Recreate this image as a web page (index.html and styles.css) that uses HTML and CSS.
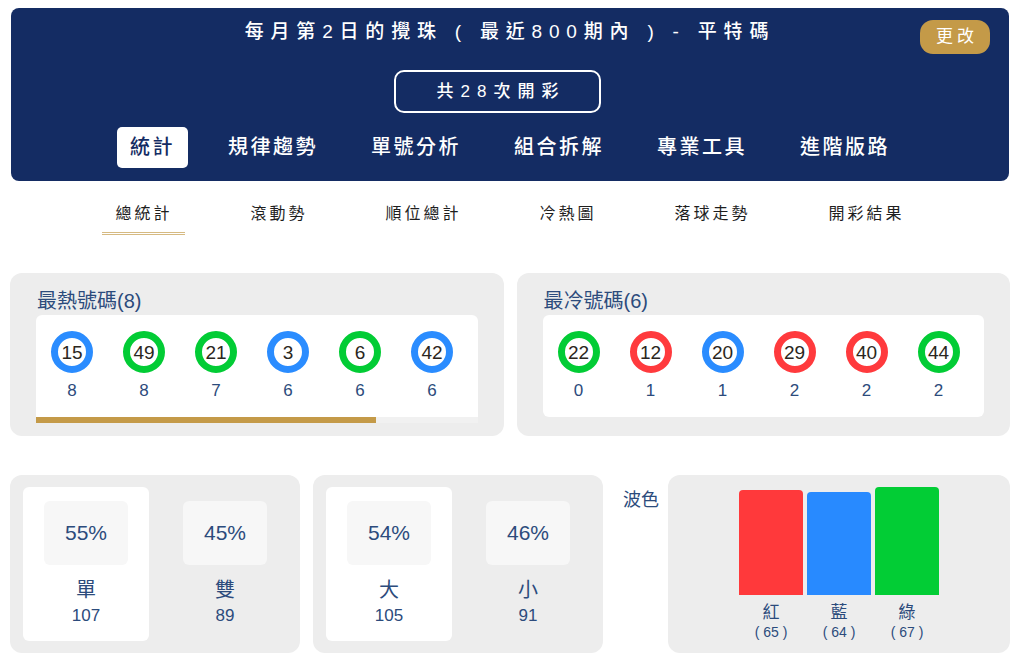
FILE: index.html
```html
<!DOCTYPE html>
<html lang="zh-Hant">
<head>
<meta charset="utf-8">
<title>每月第2日的攪珠 - 平特碼</title>
<link rel="stylesheet" href="styles.css">
</head>
<body>
<div class="page">
  <header class="hero">
    <div class="hero-top">
      <h1 class="hero-title">每月第2日的攪珠 ( 最近800期內 ) - 平特碼</h1>
      <button class="btn-change">更改</button>
    </div>
    <div class="draw-count">共28次開彩</div>
    <nav class="main-tabs">
      <a class="tab active">統計</a>
      <a class="tab">規律趨勢</a>
      <a class="tab">單號分析</a>
      <a class="tab">組合拆解</a>
      <a class="tab">專業工具</a>
      <a class="tab">進階版路</a>
    </nav>
  </header>

  <nav class="sub-tabs">
    <a class="sub-tab active">總統計</a>
    <a class="sub-tab">滾動勢</a>
    <a class="sub-tab">順位總計</a>
    <a class="sub-tab">冷熱圖</a>
    <a class="sub-tab">落球走勢</a>
    <a class="sub-tab">開彩結果</a>
  </nav>

  <section class="hotcold">
    <div class="card ball-card">
      <h2 class="card-title">最熱號碼(8)</h2>
      <div class="ball-box">
        <div class="ball-strip">
          <div class="ball-item"><span class="ball blue">15</span><span class="cnt">8</span></div>
          <div class="ball-item"><span class="ball green">49</span><span class="cnt">8</span></div>
          <div class="ball-item"><span class="ball green">21</span><span class="cnt">7</span></div>
          <div class="ball-item"><span class="ball blue">3</span><span class="cnt">6</span></div>
          <div class="ball-item"><span class="ball green">6</span><span class="cnt">6</span></div>
          <div class="ball-item"><span class="ball blue">42</span><span class="cnt">6</span></div>
        </div>
        <div class="scroll-track"><div class="scroll-thumb" style="width:77%"></div></div>
      </div>
    </div>
    <div class="card ball-card">
      <h2 class="card-title">最冷號碼(6)</h2>
      <div class="ball-box rounded">
        <div class="ball-strip">
          <div class="ball-item"><span class="ball green">22</span><span class="cnt">0</span></div>
          <div class="ball-item"><span class="ball red">12</span><span class="cnt">1</span></div>
          <div class="ball-item"><span class="ball blue">20</span><span class="cnt">1</span></div>
          <div class="ball-item"><span class="ball red">29</span><span class="cnt">2</span></div>
          <div class="ball-item"><span class="ball red">40</span><span class="cnt">2</span></div>
          <div class="ball-item"><span class="ball green">44</span><span class="cnt">2</span></div>
        </div>
      </div>
    </div>
  </section>

  <section class="stats">
    <div class="card pair-card">
      <div class="pair-col hl">
        <div class="pct">55%</div>
        <div class="lbl">單</div>
        <div class="num">107</div>
      </div>
      <div class="pair-col">
        <div class="pct">45%</div>
        <div class="lbl">雙</div>
        <div class="num">89</div>
      </div>
    </div>
    <div class="card pair-card">
      <div class="pair-col hl">
        <div class="pct">54%</div>
        <div class="lbl">大</div>
        <div class="num">105</div>
      </div>
      <div class="pair-col">
        <div class="pct">46%</div>
        <div class="lbl">小</div>
        <div class="num">91</div>
      </div>
    </div>
    <div class="waves">
      <div class="waves-label">波色</div>
      <div class="card wave-card">
        <div class="wave-col">
          <div class="bar-wrap"><div class="bar red-bg" style="height:105px"></div></div>
          <div class="wave-name">紅</div>
          <div class="wave-cnt">( 65 )</div>
        </div>
        <div class="wave-col">
          <div class="bar-wrap"><div class="bar blue-bg" style="height:103px"></div></div>
          <div class="wave-name">藍</div>
          <div class="wave-cnt">( 64 )</div>
        </div>
        <div class="wave-col">
          <div class="bar-wrap"><div class="bar green-bg" style="height:108px"></div></div>
          <div class="wave-name">綠</div>
          <div class="wave-cnt">( 67 )</div>
        </div>
      </div>
    </div>
  </section>
</div>
</body>
</html>
```

FILE: styles.css
```css
* { box-sizing: border-box; }

html, body {
  margin: 0;
  padding: 0;
  background: #ffffff;
}

body {
  font-family: "Liberation Sans", "Noto Sans CJK TC", sans-serif;
  color: #2c4b7c;
}

.page {
  padding: 8px 13px 0 10px;
}

/* ---------- header ---------- */
.hero {
  margin: 0 1px;
  background: #142c63;
  border-radius: 8px;
  padding: 12px 19px 13px;
  color: #ffffff;
  display: flex;
  flex-direction: column;
}

.hero-top {
  display: grid;
  grid-template-columns: 1fr auto 1fr;
  align-items: start;
}

.hero-title {
  grid-column: 2;
  margin: 0;
  font-size: 19px;
  line-height: 24px;
  font-weight: 500;
  letter-spacing: 6.8px;
  white-space: nowrap;
  color: #ffffff;
}

.btn-change {
  grid-column: 3;
  justify-self: end;
  width: 70px;
  height: 34px;
  border: none;
  border-radius: 13px;
  background: #c49a48;
  color: #ffffff;
  font-family: "Liberation Sans", "Noto Sans CJK TC", sans-serif;
  font-size: 17px;
  letter-spacing: 4px;
  padding: 0 0 0 4px;
  line-height: 34px;
}

.draw-count {
  align-self: center;
  margin: 16px 25px 0 0;
  width: 207px;
  height: 43px;
  border: 2px solid #ffffff;
  border-radius: 10px;
  font-size: 17px;
  font-weight: 500;
  line-height: 39px;
  letter-spacing: 7px;
  text-align: center;
  padding-left: 7px;
}

.main-tabs {
  margin-top: 14px;
  display: flex;
  justify-content: center;
  gap: 27px;
}

.tab {
  padding: 10px 13px;
  font-size: 20px;
  line-height: 21px;
  font-weight: 500;
  letter-spacing: 2.5px;
  color: #ffffff;
  border-radius: 5px;
}

.tab.active {
  background: #ffffff;
  color: #142c63;
}

/* ---------- sub tabs ---------- */
.sub-tabs {
  margin-top: 21px;
  display: flex;
  justify-content: center;
  gap: 52px;
}

.sub-tab {
  padding: 0 13px 6px;
  font-size: 16px;
  line-height: 24px;
  letter-spacing: 3px;
  color: #1e1e1e;
  border-bottom: 3px solid transparent;
}

.sub-tab.active {
  border-bottom: 3px double #d6ba82;
}

/* ---------- cards ---------- */
.card {
  background: #ededed;
  border-radius: 12px;
}

.hotcold {
  margin-top: 38px;
  display: grid;
  grid-template-columns: minmax(0, 1fr) minmax(0, 1fr);
  gap: 13px;
}

.ball-card {
  min-width: 0;
  padding: 16px 26px 13px;
}

.card-title {
  margin: 0 0 2px;
  padding-left: 1px;
  font-size: 20px;
  line-height: 24px;
  font-weight: 400;
  color: #2c4b7c;
}

.ball-box {
  background: #ffffff;
  border-radius: 6px 6px 0 0;
  overflow: hidden;
}

.ball-box.rounded {
  border-radius: 6px;
}

.ball-strip {
  display: flex;
  padding: 16px 0;
}

.scroll-track {
  height: 6px;
  background: #f1f1f1;
}

.scroll-thumb {
  height: 100%;
  background: #c49a48;
}

.ball-item {
  flex: 0 0 72px;
  width: 72px;
  display: flex;
  flex-direction: column;
  align-items: center;
}

.ball {
  width: 42px;
  height: 42px;
  border-radius: 50%;
  border: 7px solid #2a8cff;
  background: #ffffff;
  display: flex;
  align-items: center;
  justify-content: center;
  font-size: 19px;
  line-height: 1;
  color: #2b2620;
}

.ball.blue { border-color: #2a8cff; }
.ball.green { border-color: #02cc35; }
.ball.red { border-color: #ff3a3d; }

.cnt {
  margin-top: 8px;
  font-size: 17px;
  line-height: 20px;
  color: #2c4b7c;
}

/* ---------- bottom stats ---------- */
.stats {
  margin-top: 39px;
  display: flex;
  gap: 13px;
}

.pair-card {
  flex: 0 0 290px;
  padding: 12px 12px 12px 13px;
  display: grid;
  grid-template-columns: 126px 126px;
  gap: 13px;
}

.pair-col {
  display: flex;
  flex-direction: column;
  align-items: center;
  padding: 14px 0 11px;
  border-radius: 6px;
}

.pair-col.hl {
  background: #ffffff;
}

.pct {
  width: 84px;
  height: 64px;
  border-radius: 6px;
  background: #f7f7f7;
  display: flex;
  align-items: center;
  justify-content: center;
  font-size: 21px;
  color: #2c4b7c;
}

.lbl {
  margin-top: 12px;
  font-size: 20px;
  line-height: 26px;
}

.num {
  font-size: 17px;
  line-height: 26px;
}

.waves {
  flex: 1;
  display: flex;
  align-items: flex-start;
  padding-left: 7px;
}

.waves-label {
  margin-top: 13px;
  width: 36px;
  margin-right: 9px;
  font-size: 18px;
  line-height: 24px;
  white-space: nowrap;
}

.wave-card {
  flex: 1;
  align-self: stretch;
  display: flex;
  justify-content: center;
  gap: 4px;
  padding: 12px 0;
}

.wave-col {
  width: 64px;
  display: flex;
  flex-direction: column;
  align-items: center;
}

.bar-wrap {
  width: 100%;
  height: 108px;
  display: flex;
  align-items: flex-end;
}

.bar {
  width: 100%;
  border-radius: 4px 4px 0 0;
}

.red-bg { background: #ff393b; }
.blue-bg { background: #288aff; }
.green-bg { background: #02cd35; }

.wave-name {
  margin-top: 8px;
  font-size: 17px;
  line-height: 20px;
}

.wave-cnt {
  font-size: 14px;
  line-height: 18px;
  white-space: pre;
}
```
